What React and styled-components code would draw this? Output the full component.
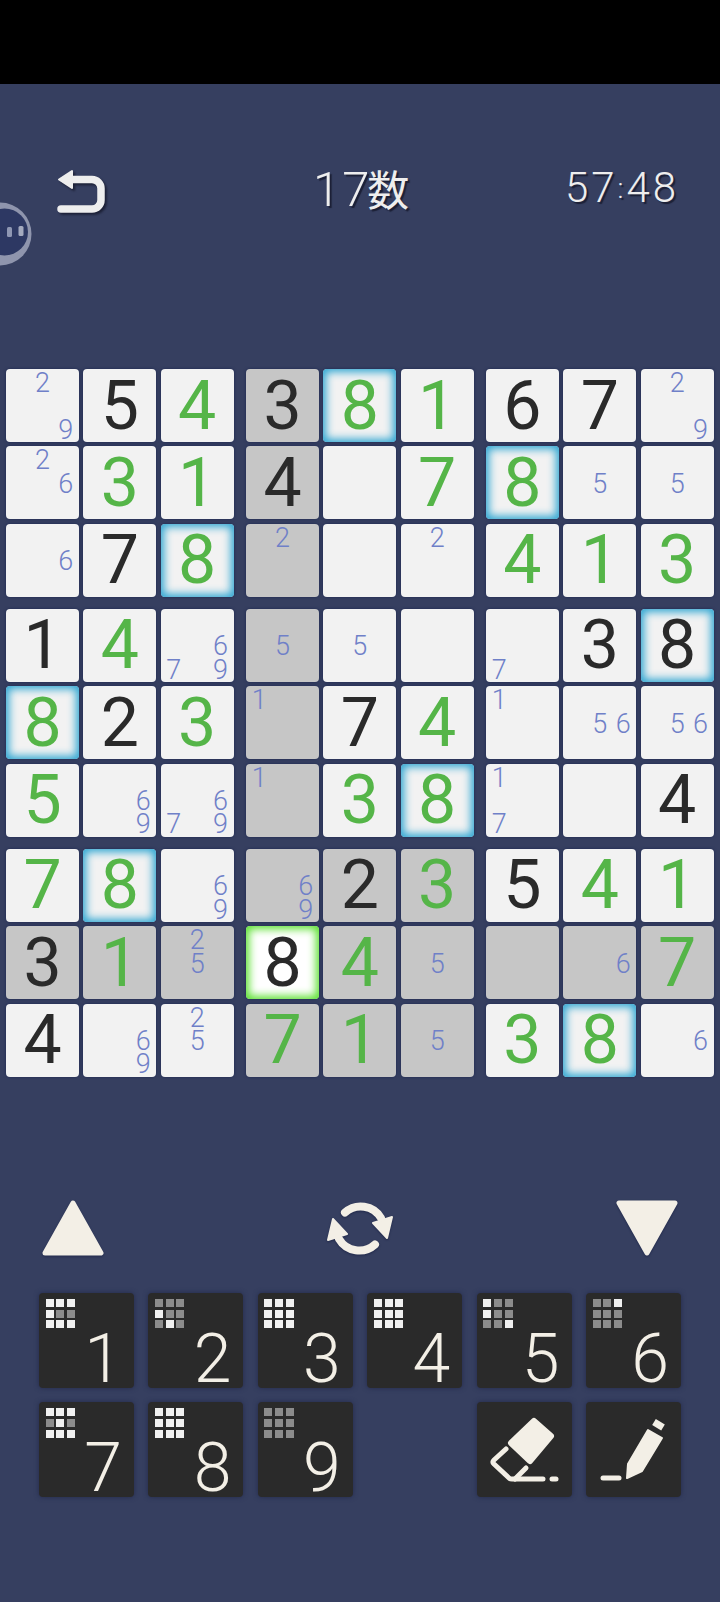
import * as React from "react";
import styled, { createGlobalStyle } from "styled-components";

const colors = {
  page: "#363f60",
  cream: "#f3efe6",
  cell: "#f2f2f2",
  shaded: "#c6c6c6",
  green: "#55b548",
  ink: "#2a2a2a",
  note: "#6f80c8",
  key: "#2a2a2a",
};

const digitFont = `Roboto, "Liberation Sans", sans-serif`;

const GlobalStyle = createGlobalStyle`
  html, body {
    margin: 0;
    padding: 0;
    background: ${colors.page};
  }
`;

const Page = styled.div`
  position: relative;
  width: 720px;
  height: 1602px;
  overflow: hidden;
  background: ${colors.page};
  font-family: ${digitFont};
`;

const StatusBar = styled.div`
  height: 84px;
  background: #000;
`;

const Header = styled.header`
  display: grid;
  grid-template-columns: 256px 100px 1fr;
  align-items: start;
  height: 45px;
  padding: 85px 41px 155px 57px;
`;

const UndoIcon = styled.svg`
  width: 48px;
  height: 45px;
  filter: drop-shadow(2px 2px 1px #1c2036);
`;

const Title = styled.div`
  color: #eeeeee;
  font-size: 49px;
  font-weight: 300;
  letter-spacing: 2px;
  line-height: 37px;
  white-space: nowrap;
  text-shadow: 2px 2px 1px #1c2036;
`;

const Kanji = styled.span`
  margin-left: -4px;
  font-family: "Noto Sans CJK JP", sans-serif;
  font-size: 42px;
  font-weight: 400;
  letter-spacing: 0;
`;

const Time = styled.div`
  justify-self: end;
  color: #eeeeee;
  font-size: 42px;
  font-weight: 300;
  letter-spacing: 3px;
  line-height: 37px;
  white-space: nowrap;
  text-shadow: 2px 2px 1px #1c2036;
`;

const Colon = styled.span`
  font-size: 28px;
  vertical-align: 4px;
`;

const Bubble = styled.svg`
  position: absolute;
  left: 0;
  top: 202px;
  width: 33px;
  height: 64px;
`;

const Board = styled.div`
  display: grid;
  grid-template-columns: repeat(3, 227.67px);
  gap: 12.33px;
  margin-left: 6px;
`;

const Box = styled.div`
  display: grid;
  grid-template-columns: repeat(3, 73px);
  grid-auto-rows: 73px;
  gap: 4.33px;
`;

const glow = {
  blue: "inset 0 0 9px 3px #2ea6d2",
  green: "inset 0 0 8px 3px #58e02c",
};

const Cell = styled.div`
  display: flex;
  align-items: center;
  justify-content: center;
  border-radius: 4px;
  background: ${(p) => (p.$selected ? "#ffffff" : p.$shaded ? colors.shaded : colors.cell)};
  box-shadow: ${(p) => (p.$glow ? `${glow[p.$glow]}, ` : "")}0 0 3px #1c2650;
  color: ${(p) => (p.$given ? colors.ink : colors.green)};
  font-size: 68px;
  font-weight: 400;
  line-height: 1;
`;

const Notes = styled.div`
  display: grid;
  grid-template-columns: repeat(3, 1fr);
  grid-template-rows: repeat(3, 1fr);
  width: 100%;
  height: 100%;
  padding: 3px 1.5px 0;
  box-sizing: border-box;
`;

const Note = styled.span`
  grid-column: ${(p) => p.$col};
  grid-row: ${(p) => p.$row};
  display: flex;
  align-items: center;
  justify-content: center;
  color: ${colors.note};
  font-size: 27px;
  font-weight: 300;
  line-height: 23px;
`;

const Controls = styled.div`
  display: flex;
  align-items: center;
  justify-content: space-between;
  height: 57px;
  margin-top: 123px;
  padding: 0 42px;
`;

const ControlIcon = styled.svg`
  display: block;
  filter: drop-shadow(0 1px 1px #20284a);
`;

const Keys = styled.div`
  display: grid;
  grid-template-columns: repeat(6, 95px);
  grid-auto-rows: 95px;
  gap: 14.4px;
  margin: 36.3px 0 0 39px;
`;

const Key = styled.div`
  position: relative;
  grid-column: ${(p) => p.$col || "auto"};
  display: flex;
  align-items: flex-end;
  justify-content: flex-end;
  padding: 0 12px 0 0;
  box-sizing: border-box;
  border-radius: 4px;
  background: ${colors.key};
  box-shadow: 0 0 5px #232a4a;
  color: ${colors.cream};
  font-size: 68px;
  font-weight: 300;
  line-height: 58px;
`;

const ToolKey = styled(Key)`
  padding: 0;
`;

const Dots = styled.div`
  position: absolute;
  left: 6.7px;
  top: 6px;
  display: grid;
  grid-template-columns: repeat(3, 8px);
  grid-auto-rows: 8px;
  gap: 2.7px;
`;

const Dot = styled.i`
  display: block;
  background: ${(p) => (p.$on ? "#f0f0f0" : "#8c8c8c")};
`;

// digit = green player entry, "k" = given digit, array = pencil notes
const g = (n, extra) => ({ n, ...extra });
const k = (n, extra) => ({ n, given: true, ...extra });
const hl = (n) => g(n, { glow: "blue" });
const N = (...notes) => ({ notes });
const E = { notes: [] };

const rows = [
  [N(2, 9), k(5), g(4), k(3), hl(8), g(1), k(6), k(7), N(2, 9)],
  [N(2, 6), g(3), g(1), k(4), E, g(7), hl(8), N(5), N(5)],
  [N(6), k(7), hl(8), N(2), E, N(2), g(4), g(1), g(3)],
  [k(1), g(4), N(6, 7, 9), N(5), N(5), E, N(7), k(3), k(8, { glow: "blue" })],
  [hl(8), k(2), g(3), N(1), k(7), g(4), N(1), N(5, 6), N(5, 6)],
  [g(5), N(6, 9), N(6, 7, 9), N(1), g(3), hl(8), N(1, 7), E, k(4)],
  [g(7), hl(8), N(6, 9), N(6, 9), k(2), g(3), k(5), g(4), g(1)],
  [k(3), g(1), N(2, 5), k(8, { selected: true, glow: "green" }), g(4), N(5), E, N(6), g(7)],
  [k(4), N(6, 9), N(2, 5), g(7), g(1), N(5), g(3), hl(8), N(6)],
];

const isShaded = (r, c) => {
  if (r === 7) return true;
  if (c === 3) return r < 7 || r === 8;
  if (r === 6 && (c === 4 || c === 5)) return true;
  if (r === 8 && (c === 4 || c === 5)) return true;
  return false;
};

const keyDots = {
  1: "111100111",
  2: "000100010",
  3: "111111111",
  4: "111111111",
  5: "100100001",
  6: "001000000",
  7: "111010111",
  8: "111111111",
  9: "000000000",
};

const boxes = [0, 3, 6].flatMap((r0) =>
  [0, 3, 6].map((c0) => {
    const cells = [];
    for (let r = r0; r < r0 + 3; r++) {
      for (let c = c0; c < c0 + 3; c++) {
        cells.push({ ...rows[r][c], shaded: isShaded(r, c), id: `${r}-${c}` });
      }
    }
    return { id: `${r0}-${c0}`, cells };
  })
);

const BoardCell = ({ cell }) => (
  <Cell $shaded={cell.shaded} $selected={cell.selected} $given={cell.given} $glow={cell.glow}>
    {cell.notes ? (
      <Notes>
        {cell.notes.map((n) => (
          <Note key={n} $col={((n - 1) % 3) + 1} $row={Math.floor((n - 1) / 3) + 1}>
            {n}
          </Note>
        ))}
      </Notes>
    ) : (
      cell.n
    )}
  </Cell>
);

const NumberKey = ({ n }) => (
  <Key>
    <Dots>
      {keyDots[n].split("").map((d, i) => (
        <Dot key={i} $on={d === "1"} />
      ))}
    </Dots>
    {n}
  </Key>
);

const Undo = () => (
  <UndoIcon viewBox="0 0 48 45" fill="none">
    <path d="M14 10.5 H35 a9 9 0 0 1 9 9 V31 a9 9 0 0 1 -9 9 H4" stroke="#eeeeee" strokeWidth="7.5" strokeLinecap="round" />
    <path d="M15 2 V19 L2 10.5 Z" fill="#eeeeee" stroke="#eeeeee" strokeWidth="2" strokeLinejoin="round" />
  </UndoIcon>
);

const Triangle = ({ down }) => (
  <ControlIcon width="62" height="56" viewBox="0 0 62 56">
    <polygon
      points={down ? "3,3 59,3 31,53" : "31,3 59,53 3,53"}
      fill={colors.cream}
      stroke={colors.cream}
      strokeWidth="5"
      strokeLinejoin="round"
    />
  </ControlIcon>
);

const SwapArrow = () => (
  <g>
    <path d="M18 12.5 A23.5 23.5 0 0 1 54 18" fill="none" stroke={colors.cream} strokeWidth="8" strokeLinecap="round" />
    <polygon points="46,23 65,17 60,38" fill={colors.cream} stroke={colors.cream} strokeWidth="2" strokeLinejoin="round" />
  </g>
);

const Swap = () => (
  <ControlIcon width="66" height="57" viewBox="0 0 66 57">
    <SwapArrow />
    <g transform="rotate(180 33 28.5)">
      <SwapArrow />
    </g>
  </ControlIcon>
);

const Eraser = () => (
  <svg width="95" height="95" viewBox="0 0 95 95" fill="none" stroke={colors.cream} strokeLinecap="round" strokeLinejoin="round">
    <polygon points="57,19 74,34 53,59 34,41" fill={colors.cream} strokeWidth="6" />
    <path d="M29 47 L17 58 Q15 60 17 62 L32 76 Q33 77 35 77 H66" strokeWidth="5" />
    <path d="M49 66 L38 77" strokeWidth="5" />
    <path d="M75 77 H79" strokeWidth="5" />
  </svg>
);

const Pencil = () => (
  <svg width="95" height="95" viewBox="0 0 95 95" fill="none" stroke={colors.cream} strokeLinecap="round" strokeLinejoin="round">
    <polygon points="41,76 42,62 62,28 76,36 56,69" fill={colors.cream} strokeWidth="2" />
    <path d="M68 20 L77 25.5" strokeWidth="7" strokeLinecap="butt" />
    <path d="M17 76 H33" strokeWidth="5" />
  </svg>
);

const App = () => (
  <Page>
    <GlobalStyle />
    <StatusBar />
    <Header>
      <Undo />
      <Title>
        17<Kanji>数</Kanji>
      </Title>
      <Time>
        57<Colon>:</Colon>48
      </Time>
    </Header>
    <Bubble viewBox="0 0 33 64">
      <circle cx="0" cy="32" r="31.5" fill="#8f95ad" />
      <circle cx="4.5" cy="30" r="23.5" fill="#2d3863" />
      <rect x="7" y="25" width="5" height="10" rx="1.5" fill="#8f97b3" />
      <rect x="18.5" y="24" width="5" height="10" rx="1.5" fill="#a4aabf" />
    </Bubble>
    <Board>
      {boxes.map((box) => (
        <Box key={box.id}>
          {box.cells.map((cell) => (
            <BoardCell key={cell.id} cell={cell} />
          ))}
        </Box>
      ))}
    </Board>
    <Controls>
      <Triangle />
      <Swap />
      <Triangle down />
    </Controls>
    <Keys>
      {[1, 2, 3, 4, 5, 6, 7, 8, 9].map((n) => (
        <NumberKey key={n} n={n} />
      ))}
      <ToolKey $col={5}>
        <Eraser />
      </ToolKey>
      <ToolKey>
        <Pencil />
      </ToolKey>
    </Keys>
  </Page>
);

export default App;
